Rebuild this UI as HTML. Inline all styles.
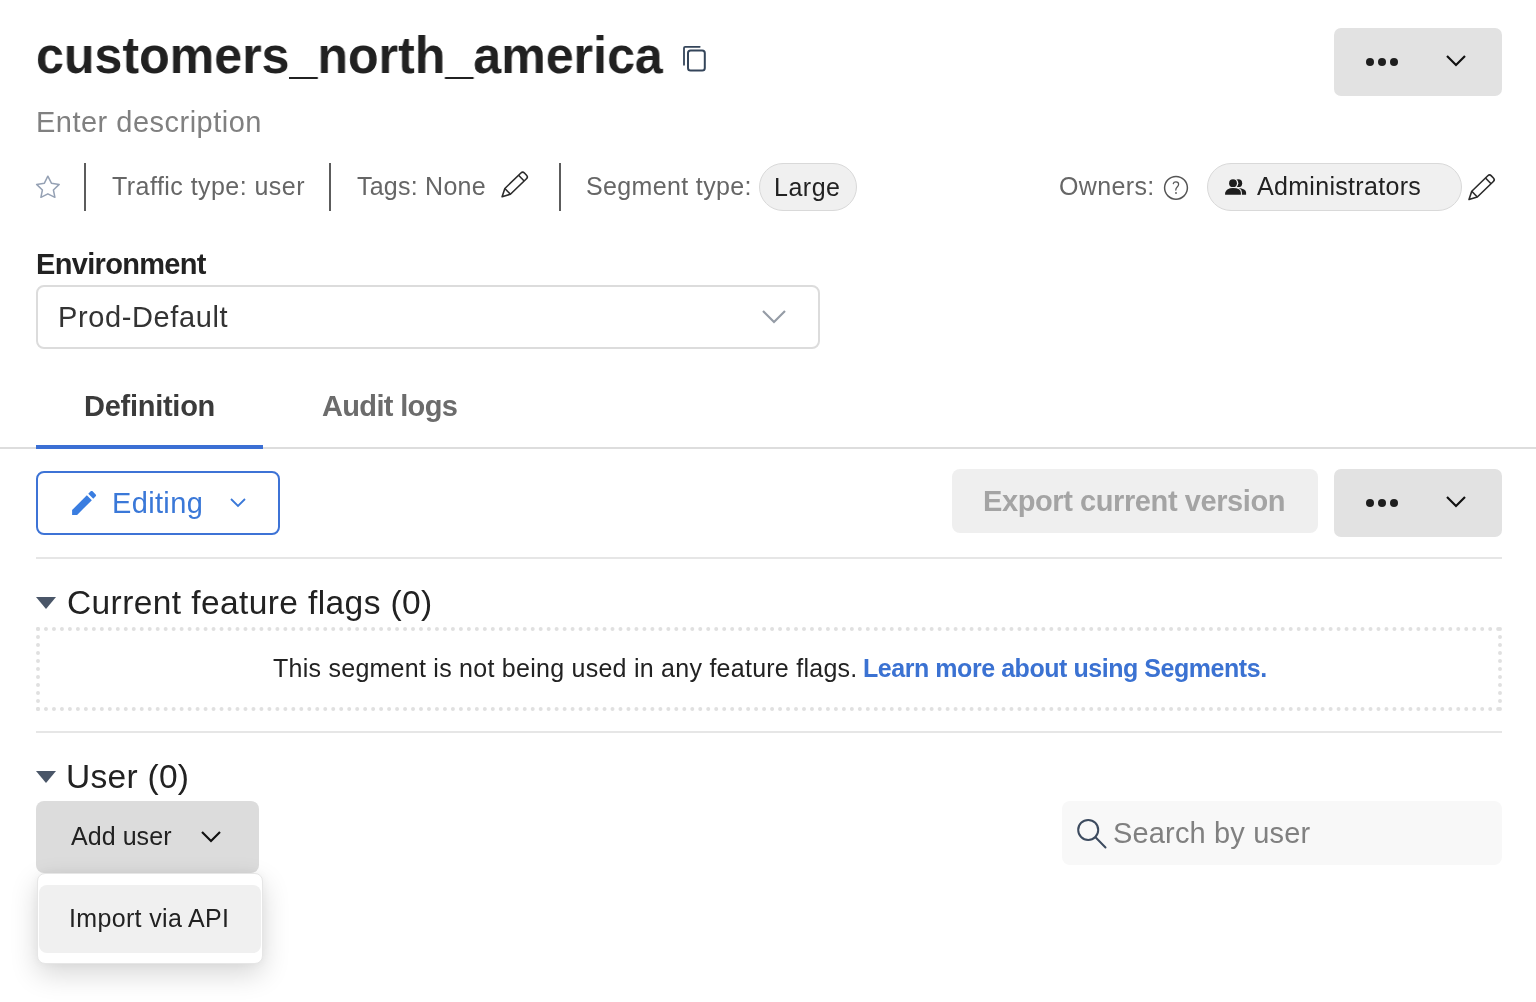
<!DOCTYPE html>
<html><head><meta charset="utf-8"><style>
html,body{margin:0;padding:0;background:#fff;width:1536px;height:1002px;overflow:hidden;position:relative}
.t{position:absolute;will-change:transform;font-family:"Liberation Sans", sans-serif;line-height:1;white-space:nowrap}
.b{position:absolute;box-sizing:border-box}
svg{position:absolute;left:0;top:0;overflow:visible}
</style></head><body>
<!-- top-right more button -->
<div class="b" style="left:1334px;top:28px;width:168px;height:68px;background:#e2e2e2;border-radius:7px"></div>
<!-- meta pills -->
<div class="b" style="left:759px;top:163px;width:98px;height:48px;background:#f0f0f0;border:1px solid #d9d9d9;border-radius:24px"></div>
<div class="b" style="left:1207px;top:163px;width:255px;height:48px;background:#f0f0f0;border:1px solid #d9d9d9;border-radius:24px"></div>
<!-- separators -->
<div class="b" style="left:84px;top:163px;width:2px;height:48px;background:#5c5c5c"></div>
<div class="b" style="left:329px;top:163px;width:2px;height:48px;background:#5c5c5c"></div>
<div class="b" style="left:559px;top:163px;width:2px;height:48px;background:#5c5c5c"></div>
<!-- env select -->
<div class="b" style="left:36px;top:285px;width:784px;height:64px;border:2px solid #dcdcdc;border-radius:8px"></div>
<!-- tabs -->
<div class="b" style="left:0;top:446.5px;width:1536px;height:2px;background:#dddddd"></div>
<div class="b" style="left:36px;top:445px;width:227px;height:4px;background:#3b6fd4"></div>
<!-- editing button -->
<div class="b" style="left:36px;top:471px;width:244px;height:64px;border:2px solid #3d73d6;border-radius:8px"></div>
<!-- export -->
<div class="b" style="left:952px;top:469px;width:366px;height:64px;background:#efefef;border-radius:8px"></div>
<div class="b" style="left:1334px;top:469px;width:168px;height:68px;background:#e2e2e2;border-radius:7px"></div>
<!-- separator lines -->
<div class="b" style="left:36px;top:557px;width:1466px;height:2px;background:#e6e6e6"></div>
<div class="b" style="left:36px;top:627px;width:1466px;height:84px;border:4px dotted #e0e0e0"></div>
<div class="b" style="left:36px;top:731px;width:1466px;height:2px;background:#e6e6e6"></div>
<!-- add user -->
<div class="b" style="left:36px;top:801px;width:223px;height:72px;background:#dcdcdc;border-radius:8px"></div>
<div class="b" style="left:37px;top:873px;width:226px;height:91px;background:#fff;border:1px solid #e6e6e6;border-radius:8px;box-shadow:0 10px 28px rgba(0,0,0,0.16),0 0 10px rgba(0,0,0,0.04)"></div>
<div class="b" style="left:39px;top:885px;width:222px;height:68px;background:#f0f0f0;border-radius:8px"></div>
<!-- search -->
<div class="b" style="left:1062px;top:801px;width:440px;height:64px;background:#f8f8f8;border-radius:8px"></div>
<svg width="1536" height="1002" viewBox="0 0 1536 1002">
  <!-- copy icon -->
  <path d="M684 64.8 V48 Q684 46.8 685.2 46.8 H699.7" fill="none" stroke="#34455a" stroke-width="1.8" stroke-linecap="round"/>
  <rect x="688" y="50.5" width="16.8" height="20.1" rx="2.6" fill="none" stroke="#34455a" stroke-width="2"/>
  <!-- dots + chevron top -->
  <circle cx="1370" cy="62" r="4" fill="#1e1e1e"/><circle cx="1382" cy="62" r="4" fill="#1e1e1e"/><circle cx="1394" cy="62" r="4" fill="#1e1e1e"/>
  <polyline points="1447,56 1456,65 1465,56" fill="none" stroke="#111" stroke-width="2.2"/>
  <!-- dots + chevron 2 -->
  <circle cx="1370" cy="503" r="4" fill="#1e1e1e"/><circle cx="1382" cy="503" r="4" fill="#1e1e1e"/><circle cx="1394" cy="503" r="4" fill="#1e1e1e"/>
  <polyline points="1447,497 1456,506 1465,497" fill="none" stroke="#111" stroke-width="2.2"/>
  <!-- star -->
  <path d="M47.85 176.2 L51.4 183.2 L59.2 184.4 L53.4 190 L54.9 197.3 L47.85 193.8 L40.9 197.3 L42.4 190 L36.6 184.4 L44.4 183.2 Z" fill="none" stroke="#95a1b4" stroke-width="1.5" stroke-linejoin="round"/>
  <!-- pencil outline 1 -->
  <g transform="translate(502.1,196.7) rotate(-44)" fill="none" stroke="#2b2b2b" stroke-width="1.6" stroke-linejoin="round">
    <path d="M0 0 L7.7 -4 H30 Q32.5 -4 32.5 -1.5 V1.5 Q32.5 4 30 4 H7.7 Z"/>
    <line x1="7.7" y1="-4" x2="7.7" y2="4"/><line x1="26.8" y1="-4" x2="26.8" y2="4"/>
  </g>
  <!-- pencil outline 2 -->
  <g transform="translate(1469,199.5) rotate(-44)" fill="none" stroke="#2b2b2b" stroke-width="1.6" stroke-linejoin="round">
    <path d="M0 0 L7.7 -4 H30 Q32.5 -4 32.5 -1.5 V1.5 Q32.5 4 30 4 H7.7 Z"/>
    <line x1="7.7" y1="-4" x2="7.7" y2="4"/><line x1="26.8" y1="-4" x2="26.8" y2="4"/>
  </g>
  <!-- help circle -->
  <circle cx="1176" cy="187.8" r="11.4" fill="none" stroke="#555" stroke-width="1.5"/>
  <path d="M1173.3 183.6 Q1173.6 181.8 1176 181.8 Q1178.6 181.8 1178.6 184.2 Q1178.6 185.8 1177 187.2 Q1175.8 188.3 1175.8 190" fill="none" stroke="#555" stroke-width="1.25" stroke-linecap="round"/>
  <circle cx="1176" cy="193" r="0.9" fill="#555"/>
  <!-- people icon -->
  <circle cx="1238.3" cy="183.2" r="3.9" fill="#1e1e1e"/>
  <path d="M1240.2 194.8 V192 Q1240.2 189.5 1238 188 Q1246.1 188.5 1246.1 192.5 V194.8 Z" fill="#1e1e1e"/>
  <circle cx="1233" cy="183.2" r="5.3" fill="#f0f0f0"/>
  <circle cx="1233" cy="183.2" r="3.9" fill="#1e1e1e"/>
  <path d="M1224 195.8 V192.5 Q1226 187 1233 187 Q1241.9 187 1241.9 192.5 V195.8 Z" fill="#f0f0f0"/>
  <path d="M1225.1 194.8 V192.8 Q1226.5 188 1233 188 Q1240.9 188 1240.9 192.8 V194.8 Z" fill="#1e1e1e"/>
  <!-- env chevron -->
  <polyline points="763,311 774,322 785,311" fill="none" stroke="#959ca6" stroke-width="2.2"/>
  <!-- editing pencil (material edit) -->
  <g transform="translate(68.1,486.9) scale(1.3333)" fill="#3a7de0">
    <path d="M3 17.25V21h3.75L17.81 9.94l-3.75-3.75L3 17.25zM20.71 7.04c.39-.39.39-1.02 0-1.41l-2.34-2.34c-.39-.39-1.02-.39-1.41 0l-1.83 1.83 3.75 3.75 1.83-1.83z"/>
  </g>
  <polyline points="231,499 238,506 245,499" fill="none" stroke="#3a78d8" stroke-width="1.8"/>
  <!-- triangles -->
  <polygon points="36,597 56,597 46,609" fill="#4a5668"/>
  <polygon points="36,771 56,771 46,783" fill="#4a5668"/>
  <!-- add user chevron -->
  <polyline points="202,832 211,841 220,832" fill="none" stroke="#111" stroke-width="2.2"/>
  <!-- search icon -->
  <circle cx="1088.2" cy="829.9" r="10" fill="none" stroke="#3d4b5f" stroke-width="2"/>
  <line x1="1095.5" y1="837.2" x2="1105.5" y2="847.5" stroke="#3d4b5f" stroke-width="2" stroke-linecap="round"/>
</svg>

<div class="t" style="left:36.29px;top:29.40px;font-size:52.5px;font-weight:700;color:#212121;transform-origin:0 0;transform:scaleX(0.9547)">customers_north_america</div>
<div class="t" style="left:36.20px;top:108.00px;font-size:29px;font-weight:400;color:#808080;letter-spacing:0.488px">Enter description</div>
<div class="t" style="left:111.70px;top:173.80px;font-size:25px;font-weight:400;color:#666666;letter-spacing:0.453px">Traffic type: user</div>
<div class="t" style="left:356.50px;top:173.80px;font-size:25px;font-weight:400;color:#666666;letter-spacing:0.233px">Tags: None</div>
<div class="t" style="left:585.70px;top:173.80px;font-size:25px;font-weight:400;color:#666666;letter-spacing:0.358px">Segment type:</div>
<div class="t" style="left:774.00px;top:174.50px;font-size:25px;font-weight:400;color:#222222;letter-spacing:0.500px">Large</div>
<div class="t" style="left:1058.50px;top:174.30px;font-size:25px;font-weight:400;color:#666666;letter-spacing:0.367px">Owners:</div>
<div class="t" style="left:1257.20px;top:174.30px;font-size:25px;font-weight:400;color:#222222;letter-spacing:0.308px">Administrators</div>
<div class="t" style="left:36.00px;top:250.00px;font-size:29px;font-weight:700;color:#222222;letter-spacing:-0.675px">Environment</div>
<div class="t" style="left:57.80px;top:303.00px;font-size:29px;font-weight:400;color:#333333;letter-spacing:0.609px">Prod-Default</div>
<div class="t" style="left:83.70px;top:391.90px;font-size:29px;font-weight:700;color:#3b3b3b;letter-spacing:-0.267px">Definition</div>
<div class="t" style="left:321.50px;top:391.90px;font-size:29px;font-weight:700;color:#6c6c6c;letter-spacing:-0.656px">Audit logs</div>
<div class="t" style="left:111.90px;top:489.20px;font-size:29px;font-weight:400;color:#3a78d8;letter-spacing:0.350px">Editing</div>
<div class="t" style="left:983.30px;top:487.20px;font-size:29px;font-weight:700;color:#a4a4a4;letter-spacing:-0.405px">Export current version</div>
<div class="t" style="left:66.60px;top:586.00px;font-size:33.5px;font-weight:400;color:#222222;letter-spacing:0.400px">Current feature flags (0)</div>
<div class="t" style="left:272.90px;top:655.60px;font-size:25px;font-weight:400;color:#222222;letter-spacing:0.257px">This segment is not being used in any feature flags.</div>
<div class="t" style="left:862.50px;top:655.60px;font-size:25px;font-weight:700;color:#3b72d2;letter-spacing:-0.452px">Learn more about using Segments.</div>
<div class="t" style="left:66.20px;top:760.10px;font-size:33.5px;font-weight:400;color:#222222;letter-spacing:0.286px">User (0)</div>
<div class="t" style="left:71.00px;top:824.10px;font-size:25px;font-weight:400;color:#222222;letter-spacing:0.057px">Add user</div>
<div class="t" style="left:69.00px;top:906.10px;font-size:25px;font-weight:400;color:#222222;letter-spacing:0.338px">Import via API</div>
<div class="t" style="left:1113.20px;top:819.20px;font-size:29px;font-weight:400;color:#808080;letter-spacing:0.162px">Search by user</div>

</body></html>
